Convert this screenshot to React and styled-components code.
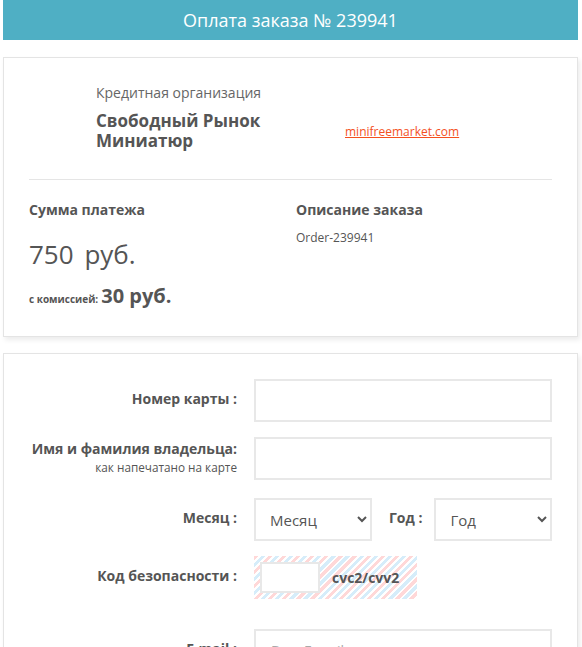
import React from 'react'
import { styled, createGlobalStyle } from 'styled-components'

const GlobalStyle = createGlobalStyle`
  body {
    margin: 0;
    background: #fff;
    font-family: "Open Sans", "Noto Sans", sans-serif;
    color: #555;
  }
`

function App() {
  return (
    <Page>
      <GlobalStyle />
      <Header>Оплата заказа № 239941</Header>

      <Card $bottom={25}>
        <OrgBlock>
          <OrgCaption>Кредитная организация</OrgCaption>
          <OrgLine>
            <OrgName>Свободный Рынок<br />Миниатюр</OrgName>
            <SiteLink href="#">minifreemarket.com</SiteLink>
          </OrgLine>
        </OrgBlock>
        <Divider />
        <Summary>
          <div>
            <SectionTitle>Сумма платежа</SectionTitle>
            <Amount>
              <span>750</span> <span>руб.</span>
            </Amount>
            <Fee>
              <FeeLabel>с комиссией:</FeeLabel><FeeValue>30 руб.</FeeValue>
            </Fee>
          </div>
          <div>
            <SectionTitle>Описание заказа</SectionTitle>
            <OrderText>Order-239941</OrderText>
          </div>
        </Summary>
      </Card>

      <Card $gap={16}>
        <Row>
          <Label>Номер карты :</Label>
          <Input type="text" />
        </Row>
        <Row $gap={15}>
          <Label>
            Имя и фамилия владельца:
            <Hint>как напечатано на карте</Hint>
          </Label>
          <Input type="text" />
        </Row>
        <Row $gap={18}>
          <Label>Месяц :</Label>
          <Dates>
            <Select defaultValue="">
              <option value="">Месяц</option>
            </Select>
            <Label>Год :</Label>
            <Select defaultValue="">
              <option value="">Год</option>
            </Select>
          </Dates>
        </Row>
        <Row $gap={15}>
          <Label>Код безопасности :</Label>
          <CvcBox>
            <CvcInput type="text" />
            <CvcText>cvc2/cvv2</CvcText>
          </CvcBox>
        </Row>
        <Row $gap={30}>
          <Label>E-mail :</Label>
          <Input type="text" placeholder="Ваш E-mail" />
        </Row>
      </Card>
    </Page>
  )
}

export default App

const Page = styled.div`
  padding: 0 4px 40px 3px;
`

const Header = styled.div`
  height: 40px;
  background: #4fafc4;
  color: #fff;
  font-size: 18px;
  display: flex;
  align-items: center;
  justify-content: center;
`

const Card = styled.div`
  margin-top: ${p => p.$gap || 17}px;
  border: 1px solid #e4e4e4;
  box-shadow: 2px 3px 5px rgba(0, 0, 0, 0.08);
  padding: 25px 25px ${p => p.$bottom || 26}px;
  background: #fff;
`

const OrgBlock = styled.div`
  padding-left: 67px;
`

const OrgCaption = styled.div`
  font-size: 14px;
  line-height: 20px;
  color: #666;
`

const OrgLine = styled.div`
  display: grid;
  grid-template-columns: 249px auto;
  align-items: center;
  margin-top: 8px;
`

const OrgName = styled.div`
  font-size: 17px;
  font-weight: 700;
  line-height: 20px;
  color: #555;
`

const SiteLink = styled.a`
  font-size: 12px;
  color: #f4511e;
  text-decoration: underline;
`

const Divider = styled.div`
  border-top: 1px solid #e5e5e5;
  margin: 28px 0 20px;
`

const Summary = styled.div`
  display: grid;
  grid-template-columns: 267px 1fr;
`

const SectionTitle = styled.div`
  font-size: 14px;
  font-weight: 700;
  line-height: 20px;
`

const Amount = styled.div`
  margin-top: 16px;
  font-size: 26px;
  line-height: 36px;
  span + span {
    margin-left: 4px;
  }
`

const Fee = styled.div`
  margin-top: 12px;
  line-height: 24px;
  font-weight: 700;
`

const FeeLabel = styled.span`
  font-size: 10px;
  margin-right: 3px;
`

const FeeValue = styled.span`
  font-size: 20px;
`

const OrderText = styled.div`
  margin-top: 9px;
  font-size: 12px;
  line-height: 18px;
`

const Row = styled.div`
  display: grid;
  grid-template-columns: 208px 1fr;
  column-gap: 17px;
  align-items: center;
  margin-top: ${p => p.$gap || 0}px;
`

const Label = styled.div`
  text-align: right;
  font-size: 14px;
  font-weight: 700;
  line-height: 20px;
  padding-bottom: 4px;
  white-space: nowrap;
`

const Hint = styled.div`
  font-size: 11.75px;
  font-weight: 400;
  line-height: 16px;
`

const Input = styled.input`
  box-sizing: border-box;
  width: 100%;
  height: 43px;
  border: 2px solid #e8e8e8;
  padding: 0 15px;
  font-family: inherit;
  font-size: 14px;
  color: #555;
  outline: none;
  &::placeholder {
    color: #aaa;
  }
`

const Dates = styled.div`
  display: flex;
  align-items: center;
  gap: 12px;
  ${Label} {
    margin-left: 5px;
  }
`

const Select = styled.select`
  box-sizing: border-box;
  width: 118px;
  height: 43px;
  border: 2px solid #e8e8e8;
  border-radius: 0;
  background: #fff;
  padding: 0 6px 0 10px;
  font-family: inherit;
  font-size: 15px;
  color: #555;
  outline: none;
`

const CvcBox = styled.div`
  display: flex;
  align-items: center;
  gap: 12px;
  width: 163px;
  height: 43px;
  box-sizing: border-box;
  padding: 6px;
  background: repeating-linear-gradient(
    135deg,
    #ffd8d8 0 3px,
    #fff 3px 5px,
    #d6edfa 5px 8px,
    #fff 8px 10px
  );
`

const CvcInput = styled.input`
  box-sizing: border-box;
  width: 60px;
  height: 31px;
  border: 2px solid #e8e8e8;
  background: #fff;
  outline: none;
`

const CvcText = styled.span`
  font-size: 14px;
  font-weight: 700;
`
